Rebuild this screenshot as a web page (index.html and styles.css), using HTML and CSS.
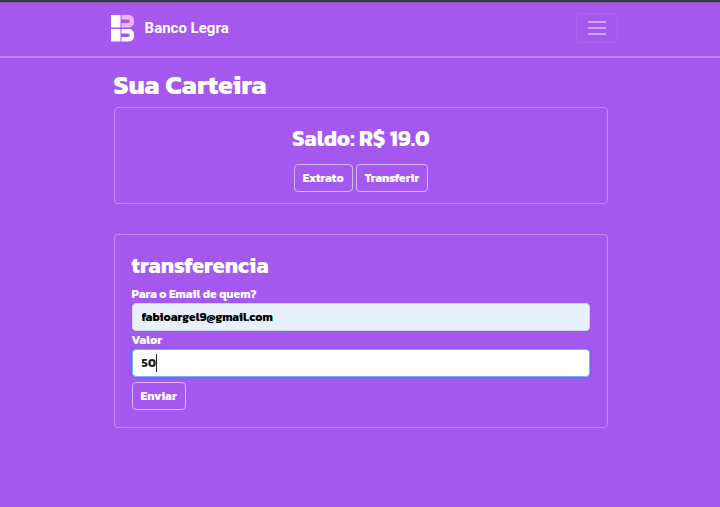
FILE: index.html
```html
<!DOCTYPE html>
<html lang="pt-BR">
<head>
<meta charset="utf-8">
<meta name="viewport" content="width=device-width, initial-scale=1">
<title>Banco Legra</title>
<link rel="stylesheet" href="styles.css">
</head>
<body>
<header class="navbar">
  <div class="container navbar-inner">
    <a class="brand" href="#">
      <svg class="logo" viewBox="0 0 24 27" aria-hidden="true">
        <path fill="#fff" d="M0 0h9.500v12.500H0zM0 14h9.500v12.500H0z"/>
        <path fill="#f0b0fb" d="M10.500 0H18a5 5 0 0 1 5 5v2.500a5 5 0 0 1-5 5h-7.500v-4.500H17a1.700 1.700 0 0 0 0-3.500h-6.500z"/>
        <path fill="#fff" d="M10.500 14H18a5 5 0 0 1 5 5v2.500a5 5 0 0 1-5 5h-7.500v-4.500H17a1.700 1.700 0 0 0 0-3.500h-6.500z"/>
      </svg>
      <span>Banco Legra</span>
    </a>
    <button class="toggler" type="button" aria-label="Menu">
      <svg class="toggler-icon" viewBox="0 0 18 16" aria-hidden="true">
        <path stroke="#d3a4f8" stroke-width="2" d="M0 2h18M0 8h18M0 14h18"/>
      </svg>
    </button>
  </div>
</header>
<main class="container">
  <h1 class="page-title">Sua Carteira</h1>
  <section class="card balance">
    <h2 class="card-title">Saldo: R$ 19.0</h2>
    <div class="actions">
      <button class="btn" type="button">Extrato</button>
      <button class="btn" type="button">Transferir</button>
    </div>
  </section>
  <section class="card">
    <h2 class="card-title">transferencia</h2>
    <form class="form">
      <label class="label" for="email">Para o Email de quem?</label>
      <input class="input input-filled" id="email" type="email" value="fabioargel9@gmail.com">
      <label class="label" for="valor">Valor</label>
      <div class="field">
        <input class="input input-amount" id="valor" type="text" inputmode="decimal" value="50" autofocus>
        <span class="caret"></span>
      </div>
      <button class="btn" type="submit">Enviar</button>
    </form>
  </section>
</main>
</body>
</html>
```
FILE: styles.css
```css
* {
  box-sizing: border-box;
}

html {
  min-height: 100%;
  background: #a558ed;
}

body {
  margin: 0;
  border-top: 2px solid #3b3346;
  color: #fff;
  font-family: Kanit, "Open Sans", "Noto Sans", sans-serif;
  font-size: 12px;
  font-weight: 700;
  line-height: 18px;
}

.container {
  width: 74%;
  margin: 0 auto;
  padding: 0 18px 0 20px;
}

.navbar {
  border-top: 1px solid #8456ae;
  border-bottom: 2px solid #c084f4;
}

.navbar-inner {
  display: flex;
  align-items: center;
  justify-content: space-between;
  padding: 10px 8px 13px 17px;
}

.brand {
  display: flex;
  align-items: center;
  gap: 10px;
  color: #fff;
  font-family: Roboto, sans-serif;
  font-size: 15px;
  text-decoration: none;
}

.logo {
  width: 24px;
  height: 27px;
}

.toggler {
  display: flex;
  padding: 6px 11px;
  background: none;
  border: 1px solid #ad65ef;
  border-radius: 5px;
}

.toggler-icon {
  width: 18px;
  height: 16px;
}

.page-title {
  margin: 10px 0 5px;
  font-size: 27px;
  line-height: 34px;
}

.card {
  margin-bottom: 30px;
  padding: 17px;
  border: 1px solid #c48bf6;
  border-radius: 4px;
}

.balance {
  padding-bottom: 11px;
  text-align: center;
}

.card-title {
  margin: 0 0 5px;
  font-size: 22px;
  line-height: 28px;
}

.actions {
  display: flex;
  justify-content: center;
  gap: 3px;
  margin-top: 11px;
}

.btn {
  padding: 4px 8px;
  background: none;
  border: 1px solid #dcb4fa;
  border-radius: 4px;
  color: #fff;
  font: inherit;
}

.form {
  display: flex;
  flex-direction: column;
  align-items: flex-start;
}

.field {
  position: relative;
  width: 100%;
}

.input {
  display: block;
  width: 100%;
  height: 28px;
  padding: 4px 9px;
  background: #fff;
  border: 1px solid #ced4da;
  border-radius: 4px;
  color: #212529;
  font: inherit;
}

.input-filled {
  background: #e8f0fe;
  color: #000;
}

.input-amount {
  caret-color: transparent;
}

.input:focus {
  border-color: #86a8fe;
  outline: 0;
  box-shadow: 0 0 0 2px #7866f0;
}

.caret {
  display: none;
  position: absolute;
  top: 5px;
  left: 24px;
  width: 1px;
  height: 18px;
  background: #212529;
}

.input:focus + .caret {
  display: block;
}

.form .btn {
  margin-top: 5px;
}
```
